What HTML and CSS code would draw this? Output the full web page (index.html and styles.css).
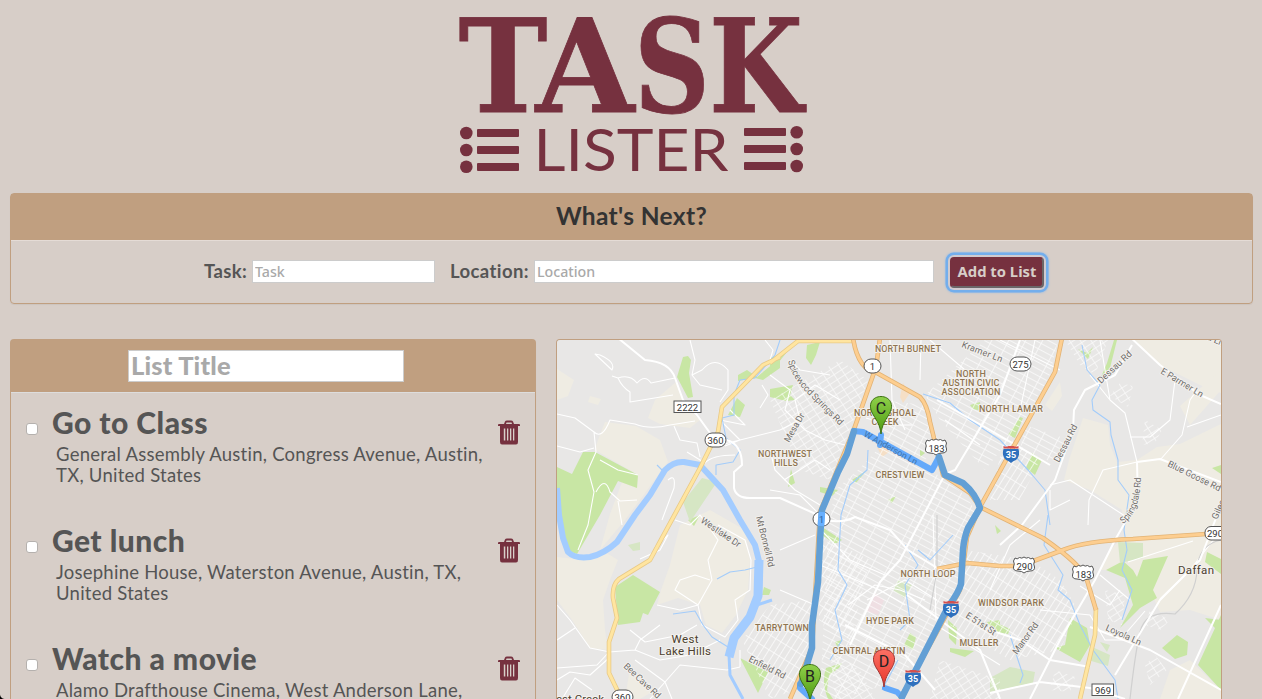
FILE: index.html
```html
<!DOCTYPE html>
<html lang="en">
<head>
<meta charset="utf-8">
<title>Task Lister</title>
<link rel="stylesheet" href="styles.css">
</head>
<body>
<header class="brand">
  <svg class="logo" viewBox="455 10 356 168" role="img" aria-label="Task Lister">
    <g class="logo-task">
      <text x="458.500" y="112" textLength="89" lengthAdjust="spacingAndGlyphs">T</text>
      <text x="535.500" y="112" textLength="99" lengthAdjust="spacingAndGlyphs">A</text>
      <text x="634" y="112" textLength="76" lengthAdjust="spacingAndGlyphs">S</text>
      <text x="709" y="112" textLength="94" lengthAdjust="spacingAndGlyphs">K</text>
    </g>
    <text class="logo-lister" x="533.500" y="171" textLength="195" lengthAdjust="spacingAndGlyphs">LISTER</text>
    <g class="logo-mark">
      <circle cx="466.300" cy="133" r="6.300"/><circle cx="466.300" cy="150" r="6.300"/><circle cx="466.300" cy="166.700" r="6.300"/>
      <rect x="477" y="129" width="42" height="8" rx="1"/><rect x="477" y="146" width="42" height="8" rx="1"/><rect x="477" y="163" width="42" height="8" rx="1"/>
      <rect x="744" y="128" width="42" height="8" rx="1"/><rect x="744" y="145" width="42" height="8" rx="1"/><rect x="744" y="162" width="42" height="8" rx="1"/>
      <circle cx="796.700" cy="132.300" r="6.300"/><circle cx="796.700" cy="149" r="6.300"/><circle cx="796.700" cy="166" r="6.300"/>
    </g>
  </svg>
</header>

<section class="panel next">
  <h2 class="next-title">What's Next?</h2>
  <form class="next-form">
    <label class="field-label label-task" for="task">Task:</label>
    <input class="field field-task" id="task" placeholder="Task">
    <label class="field-label label-location" for="location">Location:</label>
    <input class="field field-location" id="location" placeholder="Location">
    <button class="add" type="button">Add to List</button>
  </form>
</section>

<main class="columns">
  <section class="panel list">
    <div class="list-head"><input class="list-title" placeholder="List Title"></div>
    <ul class="tasks">
      <li class="task">
        <input class="check" type="checkbox">
        <div class="task-text"><h3 class="task-name">Go to Class</h3><p class="task-place">General Assembly Austin, Congress Avenue, Austin,<br>TX, United States</p></div>
        <svg class="trash" viewBox="0 0 22 25"><use href="#trash"/></svg>
      </li>
      <li class="task">
        <input class="check" type="checkbox">
        <div class="task-text"><h3 class="task-name">Get lunch</h3><p class="task-place">Josephine House, Waterston Avenue, Austin, TX,<br>United States</p></div>
        <svg class="trash" viewBox="0 0 22 25"><use href="#trash"/></svg>
      </li>
      <li class="task">
        <input class="check" type="checkbox">
        <div class="task-text"><h3 class="task-name">Watch a movie</h3><p class="task-place">Alamo Drafthouse Cinema, West Anderson Lane,</p></div>
        <svg class="trash" viewBox="0 0 22 25"><use href="#trash"/></svg>
      </li>
    </ul>
  </section>

  <section class="map">
  <svg class="map-svg" viewBox="557 340 664 360">
    <defs>
      <symbol id="trash" viewBox="0 0 22 25"><path fill-rule="evenodd" d="M0 5Q0 4 1 4H6L7 1.500Q7.500.500 9 .500H13Q14.500.500 15 1.500L16 4H21Q22 4 22 5V6H20V22Q20 24.500 18 24.500H4Q2 24.500 2 22V6H0ZM8 4H14L13.500 2.500H8.500ZM5.800 8.500V20.500H7.300V8.500ZM9 8.500V20.500H10.300V8.500ZM12 8.500V20.500H13.300V8.500ZM15 8.500V20.500H16.300V8.500Z"/></symbol>
      <pattern id="gridA" width="15" height="6" patternUnits="userSpaceOnUse" patternTransform="rotate(28)"><path d="M0 .5H15M.5 0V6" class="grid"/></pattern>
      <pattern id="gridB" width="6" height="13" patternUnits="userSpaceOnUse" patternTransform="rotate(32)"><path d="M0 .5H6M.5 0V13" class="grid"/></pattern>
      <pattern id="gridC" width="9" height="6" patternUnits="userSpaceOnUse" patternTransform="rotate(-33)"><path d="M0 .5H9M.5 0V6" class="grid"/></pattern>
      <linearGradient id="pinGreen" x2="0" y2="1"><stop stop-color="#8fd04a"/><stop offset="1" stop-color="#4c9a10"/></linearGradient>
      <linearGradient id="pinRed" x2="0" y2="1"><stop stop-color="#fb7064"/><stop offset="1" stop-color="#e8362c"/></linearGradient>
      <path id="pin" d="M0 0C-1-9-4-13-7-18C-15-30-8-37.500 0-37.500S15-30 7-18C4-13 1-9 0 0Z"/>
      <path id="us" d="M-9-7Q-7-5-4.500-7.500Q-2-6-0-8Q2-6 4.500-7.500Q7-5 9-7L10.500-4Q9-1 10.500 2Q11 6 6 6Q2 6 0 8Q-2 6-6 6Q-11 6-10.500 2Q-9-1-10.500-4Z"/>
      <g id="i35"><path d="M-7.500-5Q-9.500 2-5 6Q-2 7 0 9Q2 7 5 6Q9.500 2 7.500-5Z" fill="#2f70bd"/><path d="M-7.500-5.500V-8Q-5-6.500-2.500-8H2.500Q5-6.500 7.500-8V-5.500Z" fill="#d4504f"/></g>
    </defs>
    <rect x="557" y="340" width="664" height="400" fill="#e8e7e6"/>
    <g class="sand">
      <path d="M557 369L574 380 568 396 557 400ZM655 400L676 382 685 405 700 420 690 428 660 424 648 418ZM590 396L601 399 598 405 588 402ZM605 422L636 426 660 440 668 462 650 486 640 500 625 520 600 550 610 514 622 482 637 487 638 475 595 450 598 440Z"/>
      <path d="M557 557L585 560 605 552 618 560 610 580 603 600 605 630 608 650 590 648 572 620 557 600ZM680 525L710 510 745 530 750 560 748 590 736 615 722 633 706 625 700 605 678 598 657 605 661 590 670 565ZM630 668L652 692 640 699H625Z"/>
      <path d="M1135 340H1221V393L1200 385 1160 365ZM1083 418L1108 425 1110 445 1117 462 1137 460 1157 447 1180 444 1221 424V620L1190 610 1160 612 1152 595 1130 570 1100 570 1110 550 1125 535 1122 510 1090 490 1064 480 1069 460Z"/>
      <path d="M1160 699L1170 670 1190 660 1221 690V699ZM1045 405L1060 382 1062 396 1052 411ZM1180 406L1221 370V390L1190 425Z"/>
    </g>
    <g class="park">
      <path d="M557 467L572 474 583 452 595 452 638 475 637 488 618 481 600 515 577 554 565 550 557 500Z"/>
      <path d="M683 357L688 356 691 360 689 373 693 397 688 398 677 377ZM737 398L745 405 740 417 728 415ZM738 375L747 370 757 377 780 358 780 368 763 380 755 378 738 381ZM633 575L660 592 648 615 643 613 640 622 618 625 615 587ZM740 658L768 672 758 693Z"/>
      <path d="M807 345L820 342 816 355 811 365 806 358ZM770 358L787 352 770 373ZM770 389L793 385 790 395 795 400 786 401 770 397ZM791 469L795 483 788 487ZM820 487L838 490 832 496 820 492ZM852 480L867 470 856 483ZM888 500L896 496 892 503ZM920 450L925 453 920 457ZM970 405L980 402 981 411 973 409ZM822 527L842 540 835 544 822 535ZM688 520L700 515 694 526ZM764 587L771 590 769 595 762 595Z"/>
      <path d="M1008 435L1020 417 1023 418 1015 438ZM1032 453L1042 460 1035 475 1026 468ZM1114 340H1117L1110 368 1101 377 1107 363ZM1078 349L1087 353 1093 347 1088 359ZM1212 468L1221 465V474Z"/>
      <path d="M1137 577L1143 560 1168 556 1153 590 1157 598 1140 608 1120 628 1133 605 1125 578 1106 570 1123 561 1133 570ZM1070 618L1087 628 1090 645 1080 662 1055 648 1065 645ZM1162 648L1177 635 1188 642 1187 655 1175 659ZM1221 615V690L1198 665ZM1207 552L1221 559V574L1205 562ZM1205 618L1221 620 1216 629ZM990 620L1010 629 1008 634 990 632ZM995 525L1001 531 997 534ZM948 620L957 628 956 645 949 638ZM950 648L974 651 965 657 950 652ZM910 633L916 637 913 650 904 645ZM835 642L842 640 838 648ZM826 668L842 663 839 668 829 675 827 690 833 699H828Q821 682 826 668ZM987 622L1000 620V634L990 627Z"/>
      <path class="park-soft" d="M702 478L717 482 690 522 683 502ZM990 678L1010 667 1035 672 1033 683 990 692ZM1118 542L1143 543V558L1120 563ZM898 580L912 585 904 598 893 590ZM1090 646L1110 655 1108 666 1088 660ZM1100 642L1110 645 1107 652ZM628 545L640 542 640 550 633 551Z"/>
    </g>
    <path d="M875 593L884 600 878 615 866 611Z" fill="#efdfe3"/>
    <path d="M903 383L910 393 903 403 900 397ZM878 438L889 452 882 457 877 447Z" fill="#f5dfc6"/>
    <path fill="url(#gridA)" opacity=".8" d="M880 400L925 405 938 440 925 460 880 440ZM858 470L880 447 935 473 965 495 975 510 957 600 900 680 840 699H820L828 530 835 490ZM985 340H1058L1050 375 1025 420 985 470 940 420 925 395ZM1025 425L1070 440 1060 465 1020 450Z"/>
    <path fill="url(#gridB)" opacity=".85" d="M742 640L770 605 812 600V660L795 690 770 699ZM965 550L1030 560 1060 580 1078 610 1060 650 1010 660 950 625ZM820 535L870 560 850 640 819 620ZM1005 435L1040 460 1020 500 990 500Z"/>
    <path fill="url(#gridC)" opacity=".75" d="M770 400L840 360 868 380 850 430 830 480 800 470ZM1120 383L1133 386 1128 407 1110 396ZM1145 420L1162 430 1155 443 1142 445ZM1145 665L1155 655 1167 670 1150 685ZM1105 590L1125 595 1122 625 1108 620ZM1055 670L1075 677 1070 692 1050 690ZM1150 610L1170 620 1160 630 1145 625ZM1065 340H1108L1095 375 1080 365ZM830 650L860 670 875 699H835ZM940 660L1000 680V699H930Z"/>
    <g class="streets">
      <path d="M595 354L612 370Q616 362 600 355ZM612 376L618 378Q630 374 637 383Q645 374 651 383L675 378M618 378Q622 387 630 392V402L673 395M557 414L575 418 594 432Q602 440 610 420L635 424Q650 430 670 425L695 421M594 432L596 452 588 470 594 492 588 525 578 550M557 446L580 452 594 448M596 492Q605 475 610 492L620 501 637 500M638 475L618 470 600 460M618 501L622 525M668 480Q676 473 674 488L662 520M674 426L680 440 697 443 700 457M690 340L695 360 692 375 702 370Q715 355 728 370V390L720 402M692 375L700 385 722 390M765 340L773 350 770 360M762 385L768 395 760 408M730 410L745 425 720 420 740 440 725 446M687 452L705 463Q712 455 735 455M720 445L740 440 780 430"/>
      <path d="M675 520L690 525 700 515 718 540 708 560 712 580 698 605 702 625 725 637 738 620 735 600 750 590 751 560 745 540 718 525M698 605L675 590 680 580 695 575 710 580M657 605L680 610 698 605M557 605L570 620 590 648 610 652M557 640L575 628M609 652L635 650 660 660 690 655 720 640M630 630L645 642 680 635 697 625M635 650L640 640 660 625M609 652L597 665 557 668M609 658L590 675 570 672 557 680M635 660L665 682 672 699M650 699L680 665 727 670 740 667M740 667V650M562 699L575 678 592 690M640 559L660 550 668 535 655 547"/>
      <path d="M770 375L790 390 785 410 805 430 825 440 845 445M780 430L800 420 795 400 815 385 840 400M790 360L800 370 830 375M784 480L815 460 830 470M770 450L775 470 795 490 820 505M770 490L800 495 820 515M866 418L890 425 912 425M890 340L892 400 905 430M921 340L920 380M930 340L965 370M945 420L980 445M1035 340L1020 410M1000 340L1060 370M820 565L880 590 905 605M821 530L850 560 885 575M780 590L815 605M780 550L815 535M933 515L936 620M867 600L905 580 937 600M848 605L875 585 900 590 925 600M936 625L1000 665"/>
      <path d="M1100 340L1110 400 1125 413 1137 462M1110 400L1090 375M1137 462L1103 470 1089 500 1088 525M1130 437L1150 437 1170 420 1175 380M1160 460L1182 435 1190 400 1197 390M1187 427L1221 415M1050 485L1070 480 1128 518M1050 490V510L1070 500M1128 562L1193 541M1160 599L1190 570 1221 530M1145 611L1120 640M990 590L1010 545 1040 520M1040 610L1090 615 1105 640 1130 640M1100 575L1130 600M1080 586L1110 605 1120 590"/>
    </g>
    <path d="M1221 540Q1198 545 1197 570T1175 614Q1145 610 1140 632T1130 699M937 515V570L930 610" class="rail"/>
    <g class="creeks">
      <path d="M780 340L775 355 755 378 740 380 734 395V415L722 418 726 438 740 450 733 462 716 465V475M657 465L663 471M868 450L867 470 850 485 841 515 838 570 847 585 835 610 842 640 830 660M923 394L950 403 970 420 1000 440 1028 470 1045 490 1050 525M1082 345L1087 370 1100 385 1092 400 1093 410 1110 422 1111 435 1118 460 1118 480 1129 495 1124 530 1127 550 1122 570 1132 590 1122 620M1048 515L1044 545 1063 575 1058 590 1070 600 1080 625 1093 650 1115 680 1118 699M905 545L918 565 905 585 910 620 900 630M673 614L695 611 703 625 712 637 728 647M717 579L730 572 745 570 757 567M1010 635L1018 660 1023 675 1020 683M953 535L930 560 918 550M882 690L898 660"/>
    </g>
    <path class="river" d="M557 488L559 515 563 538 568 552Q575 559 590 557Q604 554 617 542L635 515 650 495 665 470Q674 461 684 462L700 465 723 490 740 520 755 545 760 565 759 595 750 618 733 638"/>
    <path class="river wide" d="M759 560L758 596 750 617 734 638 729 657"/>
    <path class="river thin" d="M729 655L730 675 743 699M757 605L772 600"/>
    <g class="majors">
      <path d="M618 338L645 360Q670 362 675 378L683 400 697 415 710 433 727 440Q742 445 742 465L734 472V488Q736 498 750 498H780L818 515M818 518Q840 525 855 517L890 530 908 550 937 568M943 475L955 470 1000 395 1020 340M943 478L900 560 880 582 850 645M1128 335L1160 365 1200 395 1221 404M1132 345L1115 375 1085 390 1074 410 1073 430 1055 480 1022 525 1000 545M937 400L990 430 1050 465M1137 462L1160 459 1221 482M1137 462L1138 500 1115 540M1115 540L1095 580 1060 640 1030 699M1221 505L1200 560 1160 600 1115 675M1090 627L1150 650 1221 690M990 693L1040 682 1090 688 1125 699M990 630L1020 640 1050 660 1090 667M1221 605L1178 699M907 595L980 650 1000 699M845 625L905 655 935 690"/>
    </g>
    <g class="highways">
      <path class="hw-edge" d="M770 363L798 341H853M780 357L763 365 722 407 718 432 700 468 650 560 619 579Q612 585 613 598L617 618 609 642V673L622 700M1096 608L1095 635 1080 699"/>
      <path class="hw-yellow" d="M770 363L798 341H853M780 357L763 365 722 407 718 432 700 468 650 560 619 579Q612 585 613 598L617 618 609 642V673L622 700M1096 608L1095 635 1080 699"/>
      <path class="hw-edge orange" d="M853 338Q858 370 877 373L920 397Q927 404 930 422L943 475 970 493 980 507 1043 538Q1082 565 1087 580L1096 610M880 338L876 367 853 432 820 512 812 648 790 699M1062 338L1055 372 980 507 967 537 960 590 900 699M937 569L967 563 1000 566H1020L1063 550Q1085 541 1133 539L1221 533"/>
      <path class="hw-orange" d="M853 338Q858 370 877 373L920 397Q927 404 930 422L943 475 970 493 980 507 1043 538Q1082 565 1087 580L1096 610M880 338L876 367 853 432 820 512 812 648 790 699M1062 338L1055 372 980 507 967 537 960 590 900 699M937 569L967 563 1000 566H1020L1063 550Q1085 541 1133 539L1221 533"/>
    </g>
    <g class="places">
      <text x="908" y="352" textLength="66">NORTH BURNET</text>
      <text x="971" y="377" textLength="30">NORTH</text><text x="971" y="386" textLength="57">AUSTIN CIVIC</text><text x="971" y="395" textLength="59">ASSOCIATION</text>
      <text x="1011" y="412" textLength="64">NORTH LAMAR</text>
      <text x="885" y="416" textLength="62">NORTH SHOAL</text><text x="885" y="425" textLength="27">CREEK</text>
      <text x="785" y="457" textLength="54">NORTHWEST</text><text x="786" y="466" textLength="24">HILLS</text>
      <text x="900" y="478" textLength="49">CRESTVIEW</text><text x="928" y="577" textLength="55">NORTH LOOP</text>
      <text x="890" y="624" textLength="48">HYDE PARK</text><text x="782" y="631" textLength="54">TARRYTOWN</text>
      <text x="869" y="654" textLength="73">CENTRAL AUSTIN</text><text x="1011" y="606" textLength="66">WINDSOR PARK</text><text x="979" y="646" textLength="39">MUELLER</text>
    </g>
    <g class="shields">
      <rect x="674" y="401" width="27" height="11.500" rx="0"/><text x="687.500" y="410.500">2222</text>
      <rect x="705" y="433" width="21" height="14" rx="7"/><text x="715.500" y="443.500">360</text>
      <rect x="864" y="359" width="17" height="14" rx="7"/><text x="872.500" y="369.500">1</text>
      <rect x="1010" y="357" width="21" height="14" rx="7"/><text x="1020.500" y="367.500">275</text>
      <rect x="813" y="512" width="17" height="14" rx="7"/>
      <rect x="612" y="690" width="21" height="14" rx="7"/><text x="622.500" y="700.500">360</text>
      <rect x="1205" y="526.500" width="22" height="13.500" rx="6"/><text x="1215" y="537">290</text>
      <rect x="1092" y="684" width="21.500" height="11.500"/><text x="1103" y="693.500">969</text>
      <use href="#us" x="936" y="447"/><text x="936.500" y="451.500">183</text>
      <use href="#us" x="1024" y="565"/><text x="1024.500" y="569.500">290</text>
      <use href="#us" x="1083" y="573"/><text x="1083.500" y="577.500">183</text>
    </g>
    <use href="#i35" x="1011" y="454"/>
    <g class="routes">
      <path class="route-local" d="M854 431L863 432 932 470 939 457M880 445L881 435M902 697L897 692 885 688M800 684V688L812 699"/>
      <path class="route-main" d="M939 457L945 475 963 483Q976 494 980 508L968 528Q964 538 963 550L961 584Q959 592 948 607L902 697M854 431L847 454 838 472 822 510 821 522 818 582 812 625V648L801 684"/>
      <path class="route-bright" d="M822 512L821 526"/>
    </g>
    <use href="#i35" x="951" y="609"/><use href="#i35" x="913" y="678"/>
    <text class="route-num" x="821.500" y="522.500">1</text>
    <g class="i-num"><text x="1011" y="458">35</text><text x="951" y="613">35</text><text x="913" y="682">35</text></g>
    <g class="towns"><text x="685" y="643" textLength="27">West</text><text x="685" y="655" textLength="52">Lake Hills</text><text x="1196" y="574" textLength="36">Daffan</text><text x="580" y="703" textLength="48">est Creek</text></g>
    <g class="roads">
      <path id="spice" d="M788 361Q792 378 808 394T844 430" fill="none" stroke="none"/>
      <text><textPath href="#spice" textLength="84">Spicewood Springs Rd</textPath></text>
      <text transform="translate(789 443) rotate(-60)" textLength="32">Mesa Dr</text>
      <text transform="translate(961 347) rotate(21)" textLength="43">Kramer Ln</text>
      <text transform="translate(1101 384) rotate(-43)" textLength="43">Dessau Rd</text>
      <text transform="translate(1059 463) rotate(-63)" textLength="41">Dessau Rd</text>
      <text transform="translate(1160 373) rotate(31)" textLength="48">E Parmer Ln</text>
      <text transform="translate(1167 466) rotate(26)" textLength="58">Blue Goose Rd</text>
      <path id="spring" d="M1123 524Q1141 512 1141 474" fill="none" stroke="none"/>
      <text><textPath href="#spring" textLength="52">Springdale Rd</textPath></text>
      <text transform="translate(1217 520) rotate(-65)">Giles</text>
      <text transform="translate(1204 338) rotate(24)">ra Ln</text>
      <text transform="translate(700 522) rotate(34)" textLength="46">Westlake Dr</text>
      <text transform="translate(756 517) rotate(76)" textLength="52">Mt Bonnell Rd</text>
      <text transform="translate(623 667) rotate(43)" textLength="47">Bee Cave Rd</text>
      <text transform="translate(748 661) rotate(27)" textLength="40">Enfield Rd</text>
      <text transform="translate(965 617) rotate(33)" textLength="34">E 51st St</text>
      <text transform="translate(1017 655) rotate(-54)" textLength="37">Manor Rd</text>
      <text transform="translate(1105 630) rotate(24)" textLength="38">Loyola Ln</text>
    </g>
    <text class="anderson" transform="translate(863 436) rotate(29)" textLength="60">W Anderson Ln</text>
    <g class="pins">
      <use href="#pin" x="881" y="434" fill="url(#pinGreen)" stroke="#3d7113"/><text x="881" y="414">C</text>
      <use href="#pin" x="810" y="702" fill="url(#pinGreen)" stroke="#3d7113"/><text x="810" y="682">B</text>
      <use href="#pin" x="884" y="687" fill="url(#pinRed)" stroke="#9d3532"/><text x="884" y="667">D</text>
    </g>
  </svg>
  </section>
</main>
</body>
</html>
```
FILE: styles.css
```css
* { box-sizing: border-box; }
html, body { height: 100%; }
body {
  margin: 0;
  padding: 0 9px 0 10px;
  overflow: hidden;
  background: #d7cec8;
  color: #555;
  font-family: Lato, sans-serif;
}
body::after {
  content: "";
  position: fixed;
  left: 0;
  bottom: 0;
  width: 5px;
  height: 5px;
  background: radial-gradient(circle at 5px 0, transparent 4.5px, #000 5.5px);
}
h2, h3, p, ul { margin: 0; padding: 0; }

.brand { height: 193px; padding: 10px 0 0 445px; }
.logo { display: block; width: 356px; height: 168px; overflow: visible; fill: #76313f; }
.logo-task { font: bold 130px "DejaVu Serif", serif; stroke: #76313f; stroke-width: .8px; }
.logo-lister { font: 400 59px Lato, sans-serif; }

.panel {
  border: 1px solid #c09f80;
  border-radius: 4px;
  box-shadow: 0 1px 1px rgba(0, 0, 0, .05);
}
.next { height: 111px; }
.next-title {
  height: 47px;
  border-bottom: 1px solid #e5dcd6;
  background: #c09f80;
  color: #333;
  font-size: 24.5px;
  font-weight: 700;
  letter-spacing: .35px;
  line-height: 44px;
  text-align: center;
}
.next-form { display: flex; align-items: center; height: 60px; padding-left: 193px; }
.field-label { font-size: 18.5px; font-weight: 700; line-height: 20px; letter-spacing: .4px; white-space: nowrap; }
.label-task { width: 48px; }
.label-location { width: 84px; margin-left: 15px; }
.field {
  height: 23px;
  padding: 1px 2px;
  border: 1px solid #ccc;
  background: #fff;
  font: 500 14.2px "Noto Sans", sans-serif;
}
.field-task { width: 183px; }
.field-location { width: 400px; }
.field::placeholder, .list-title::placeholder { color: #a9a9a9; opacity: 1; }
.add {
  width: 94px;
  height: 31px;
  margin: 3px 0 0 16px;
  padding: 0 0 3px;
  border: 2px solid #76313f;
  border-color: #76313f #6b6668 #6b6668 #76313f;
  border-radius: 4px;
  background: #76313f;
  box-shadow: 0 0 0 2px #d0cbd0, 0 0 0 4.500px #73aeec, 0 0 2px 5px #a7c0dd;
  color: #d7cec8;
  font: 700 14.8px "Noto Sans", sans-serif;
  white-space: nowrap;
}

.columns { display: flex; gap: 20px; height: 360px; margin-top: 35px; overflow: hidden; }
.list { width: 526px; height: 360px; border-bottom: 0; border-radius: 4px 4px 0 0; }
.list-head {
  height: 53px;
  padding: 10px 0 0 117px;
  border-bottom: 1px solid #ddd;
  background: #c09f80;
}
.list-title {
  display: block;
  width: 276px;
  height: 32px;
  padding: 0 2px 3px;
  border: 1px solid #ccc;
  font: 900 25.5px Lato, sans-serif;
  letter-spacing: .2px;
}
.tasks { list-style: none; }
.task { display: flex; height: 118px; padding: 11px 15px 0; }
.task:last-child { height: 70px; }
.check {
  appearance: none;
  width: 12px;
  height: 12px;
  margin: 19px 14px 0 0;
  border: 1px solid #b5b1ae;
  border-radius: 3px;
  background: #fff;
}
.task-text { flex: 1; }
.task-name { font-size: 30px; font-weight: 900; line-height: 36px; letter-spacing: .45px; white-space: nowrap; }
.task-place { padding: 4px 0 0 4px; font-size: 18.5px; line-height: 21px; letter-spacing: .25px; white-space: nowrap; }
.trash { width: 22px; height: 25px; margin-top: 16px; fill: #76313f; }

.map { width: 666px; height: 360px; overflow: hidden; border: 1px solid #c09f80; border-bottom: 0; border-radius: 4px 4px 0 0; }
.map-svg { display: block; width: 664px; height: 360px; font-family: Roboto, sans-serif; }
.grid { fill: none; stroke: #fff; stroke-width: .8; }
.sand { fill: #efece3; }
.park { fill: #c8e6a4; }
.park-soft { fill: #d6e6c4; }
.streets { fill: none; stroke: #fff; stroke-width: 1.1; stroke-linejoin: round; }
.rail { fill: none; stroke: #d0d0d0; stroke-width: 1.2; }
.creeks { fill: none; stroke: #a3ccfa; stroke-width: 1.1; stroke-linejoin: round; }
.river { fill: none; stroke: #a3ccff; stroke-width: 6; stroke-linejoin: round; }
.wide { stroke-width: 9; }
.thin { stroke-width: 3; }
.majors { fill: none; stroke: #fff; stroke-width: 2; stroke-linejoin: round; }
.highways { fill: none; stroke-linejoin: round; }
.hw-edge { stroke: #e8c987; stroke-width: 4.6; }
.hw-yellow { stroke: #ffe5a0; stroke-width: 3; }
.hw-edge.orange { stroke: #e2b375; }
.hw-orange { stroke: #fdce90; stroke-width: 3; }
.shields { fill: #fff; stroke: #555; stroke-width: 1; }
.shields text { fill: #333; stroke: none; font-size: 9.5px; text-anchor: middle; }
.i-num { fill: #fff; font-size: 9px; font-weight: 700; text-anchor: middle; }
.routes { fill: none; stroke-linejoin: round; stroke-linecap: round; }
.route-local { stroke: #429aff; stroke-opacity: .8; stroke-width: 6; }
.route-main { stroke: #629fd5; stroke-width: 6.5; }
.route-bright { stroke: #68b0ff; stroke-width: 6.5; stroke-linecap: butt; }
.route-num { fill: #2b5f9c; font-size: 9px; text-anchor: middle; }
.places, .towns, .roads { paint-order: stroke; stroke: #f3f1ee; stroke-width: 2px; stroke-linejoin: round; }
.places { fill: #8f7551; font-size: 9px; font-weight: 500; text-anchor: middle; }
.towns { fill: #4b402f; font-size: 11.5px; text-anchor: middle; }
.roads { fill: #706d6a; font-size: 9.2px; }
.anderson { fill: #3f75ad; font-size: 9px; }
.pins text { fill: #222; font-size: 16px; text-anchor: middle; }
```
